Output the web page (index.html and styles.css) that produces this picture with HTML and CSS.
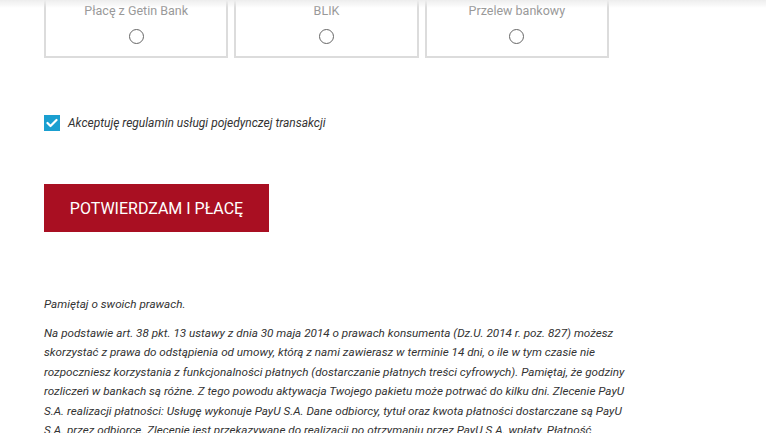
FILE: index.html
```html
<!DOCTYPE html>
<html>
<head>
<meta charset="utf-8">
<link rel="stylesheet" href="styles.css">
</head>
<body>

<!-- Cień nagłówka -->
<div class="top_shadow"></div>

<div class="page">

    <!-- Metody płatności -->
    <div class="methods">
        <label class="method">
            <span class="method_name">Płacę z Getin Bank</span>
            <span class="radio"></span>
        </label>
        <label class="method">
            <span class="method_name">BLIK</span>
            <span class="radio"></span>
        </label>
        <label class="method">
            <span class="method_name">Przelew bankowy</span>
            <span class="radio"></span>
        </label>
    </div>

    <!-- Regulamin -->
    <div class="terms">
        <span class="checkbox">
            <svg width="12" height="10" viewBox="0 0 12 10"><path d="M1.5 5 L4.5 8 L10.5 2" fill="none" stroke="#fff" stroke-width="2.2" stroke-linecap="round" stroke-linejoin="round"/></svg>
        </span>
        <span class="terms_text">Akceptuję regulamin usługi pojedynczej transakcji</span>
    </div>

    <button class="pay_btn">POTWIERDZAM I PŁACĘ</button>

    <!-- Informacja prawna -->
    <div class="legal">
        <p>Pamiętaj o swoich prawach.</p>
        <p>Na podstawie art. 38 pkt. 13 ustawy z dnia 30 maja 2014 o prawach konsumenta (Dz.U. 2014 r. poz. 827) możesz skorzystać z prawa do odstąpienia od umowy, którą z nami zawierasz w terminie 14 dni, o ile w tym czasie nie rozpoczniesz korzystania z funkcjonalności płatnych (dostarczanie płatnych treści cyfrowych). Pamiętaj, że godziny rozliczeń w bankach są różne. Z tego powodu aktywacja Twojego pakietu może potrwać do kilku dni. Zlecenie PayU S.A. realizacji płatności: Usługę wykonuje PayU S.A. Dane odbiorcy, tytuł oraz kwota płatności dostarczane są PayU S.A. przez odbiorcę. Zlecenie jest przekazywane do realizacji po otrzymaniu przez PayU S.A. wpłaty. Płatność udostępniana jest odbiorcy w ciągu 1 godziny, nie później niż do końca następnego dnia roboczego.</p>
    </div>

</div>

</body>
</html>
```

FILE: styles.css
```css
/* Strona płatności */
html, body
{
  margin: 0;
  padding: 0;
  background: #fff;
  overflow: hidden;
}

body
{
  font-family: Roboto, "Liberation Sans", sans-serif;
  color: #333;
}

.top_shadow
{
  position: fixed;
  top: 0;
  left: 0;
  right: 0;
  height: 8px;
  background: linear-gradient(#ededed, rgba(255,255,255,0));
  z-index: 2;
}

.page
{
  padding: 0 44px;
}

/* Kafelki metod płatności */
.methods
{
  display: flex;
  gap: 6px;
  margin-top: -22px;
  width: 565px;
}

.method
{
  flex: 1;
  display: flex;
  flex-direction: column;
  align-items: center;
  height: 80px;
  border: 2px solid #dcdcdc;
  box-sizing: border-box;
  padding-top: 22px;
}

.method_name
{
  font-size: 12.5px;
  color: #999;
  line-height: 18px;
}

.radio
{
  width: 15px;
  height: 15px;
  border: 1.3px solid #666;
  border-radius: 50%;
  box-sizing: border-box;
  margin-top: 9px;
}

/* Checkbox */
.terms
{
  display: flex;
  align-items: center;
  margin-top: 57px;
}

.checkbox
{
  width: 16px;
  height: 16px;
  background: #1a9fd0;
  display: flex;
  align-items: center;
  justify-content: center;
}

.terms_text
{
  margin-left: 8px;
  font-size: 12px;
  font-style: italic;
  color: #333;
}

/* Przycisk */
.pay_btn
{
  display: block;
  margin-top: 53px;
  width: 225px;
  height: 48px;
  border: none;
  background: #a90f22;
  color: #fff;
  font-family: Roboto, "Liberation Sans", sans-serif;
  font-size: 16px;
  padding: 0;
  cursor: pointer;
}

/* Tekst prawny */
.legal
{
  width: 590px;
  margin-top: 63px;
  font-size: 11.7px;
  font-style: italic;
  line-height: 19.5px;
  color: #333;
}

.legal p
{
  margin: 0 0 9px 0;
}
```
